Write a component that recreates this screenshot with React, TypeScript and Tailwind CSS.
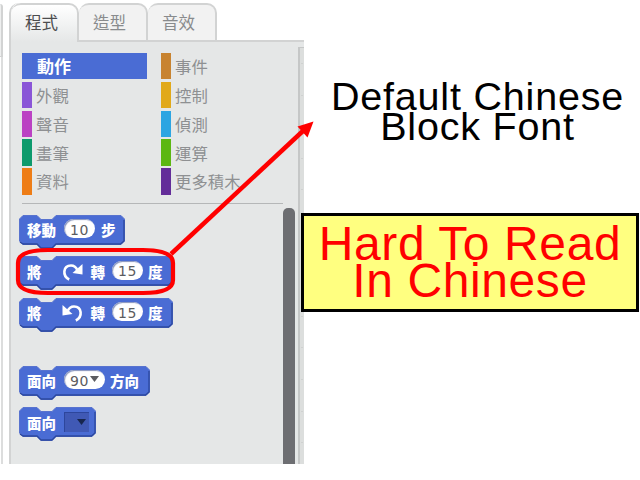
import React from "react";

const cjk = "font-['Noto_Sans_CJK_TC',sans-serif]";

function Tab({ label, active = false, width }: { label: string; active?: boolean; width: string }) {
  return (
    <div
      className={`${width} h-full rounded-t-[10px] border-t-2 border-r-2 border-[#d2d3d3] pl-[14px] pt-[5px] text-[16.5px] leading-[24px] ${
        active ? "bg-linear-to-b from-white to-[#e5e7e7] text-[#4c4d4f]" : "border-b-2 bg-[#f2f2f2] text-[#898b8d]"
      }`}
    >
      {label}
    </div>
  );
}

function Category({ label, color }: { label: string; color: string }) {
  return (
    <div className="flex h-[26.4px] items-center">
      <div className={`h-full w-[10px] shrink-0 ${color}`} />
      <span className="ml-[4px] whitespace-nowrap text-[16.4px] font-normal leading-[26px] text-[#8e9092]">{label}</span>
    </div>
  );
}

function Block({ width, className, children }: { width: number; className: string; children: React.ReactNode }) {
  const r = width - 0.5;
  const d = `M.5 4 L4 .5 H18 L22 4.5 H33 L37 .5 H${r - 3.5} L${r} 4 V26 L${r - 3.5} 29.5 H37 L33 33.5 H22 L18 29.5 H4 L.5 26Z`;
  return (
    <div className={`relative h-[30px] ${className}`} style={{ width }}>
      <svg className="absolute left-0 top-0" width={width} height="35">
        <path d={d} fill="#4a6cd4" stroke="#5873cf" strokeWidth="1" />
        <path d={`M1 27 L4 29 H18 L22 33 H33 L37 29 H${r - 4} L${r - 0.5} 26 V5`} fill="none" stroke="#2c489e" strokeWidth="1.3" />
      </svg>
      <div className="relative flex h-full items-center pl-[8px] pt-[1px] text-[14.5px] font-black leading-[20px] text-white">
        {children}
      </div>
    </div>
  );
}

function Value({ children, width }: { children: React.ReactNode; width: string }) {
  return (
    <div
      className={`${width} mb-[3px] flex h-[19px] items-center justify-center rounded-full bg-white pt-[2px] font-['DejaVu_Sans',sans-serif] text-[14px] font-normal tracking-[0.5px] text-[#5b5c60] shadow-[inset_1px_1px_1px_#8593bd]`}
    >
      {children}
    </div>
  );
}

function Turn({ left = false }: { left?: boolean }) {
  return (
    <svg className={`ml-[20px] h-[18px] w-[21px] ${left ? "-scale-x-100" : ""}`} viewBox="0 0 21 18">
      <path d="M7.2 16.5 C0 13 1 2.5 9 2.5 C13 2.5 14.5 5 15.5 7.5" fill="none" stroke="white" strokeWidth="2.6" />
      <path d="M20.5 1 V11.5 L10.5 10Z" fill="white" />
    </svg>
  );
}

export default function App() {
  return (
    <main className={`relative h-[480px] w-[640px] overflow-hidden bg-white ${cjk}`}>
      <div className="flex h-[464px] w-[304px]">
        <div className="h-full w-[3px] pt-[4px]">
          <div className="h-[53px] rounded-tr-[4px] border-b border-r-2 border-[#d2d3d3] bg-[#eeefef]" />
          <div className="h-[407px] border-r-2 border-[#dcdddd]" />
        </div>
        <section className="ml-[6px] flex w-[295px] flex-col pt-[3px]">
          <nav className="flex h-[39px]">
            <div className="h-full rounded-tl-[10px] border-l-2 border-[#d2d3d3]">
              <Tab label="程式" active width="w-[68px]" />
            </div>
            <Tab label="造型" width="w-[69px]" />
            <Tab label="音效" width="w-[69px]" />
            <div className="flex-1 border-b-2 border-[#d2d3d3]" />
          </nav>
          <div className="flex min-h-0 flex-1 border-l-2 border-[#d2d3d3] bg-[#e5e7e7]">
            <div className="flex w-[272px] flex-col">
              <div className="ml-[11px] mt-[11px] grid grid-cols-[139px_122px] gap-y-[2.4px]">
                <div className="flex h-[26.4px] w-[125px] items-center bg-[#4a6cd4] pl-[15px] text-[17px] font-bold leading-[26px] text-white">
                  動作
                </div>
                <Category label="事件" color="bg-[#c88330]" />
                <Category label="外觀" color="bg-[#8a55d7]" />
                <Category label="控制" color="bg-[#e1a91a]" />
                <Category label="聲音" color="bg-[#bb42c3]" />
                <Category label="偵測" color="bg-[#2ca5e2]" />
                <Category label="畫筆" color="bg-[#0e9a6c]" />
                <Category label="運算" color="bg-[#5cb712]" />
                <Category label="資料" color="bg-[#ee7d16]" />
                <Category label="更多積木" color="bg-[#632d99]" />
              </div>
              <div className="ml-[11px] mt-[8px] h-px bg-[#b5b7b8]" />
              <div className="ml-[8px] mt-[11px]">
                <Block width={106} className="">
                  移動
                  <div className="ml-[8px] mr-[6px]"><Value width="w-[31px]">10</Value></div>
                  步
                </Block>
                <Block width={154} className="mt-[11.5px]">
                  將
                  <Turn />
                  <span className="ml-[8px] mr-[7px]">轉</span>
                  <Value width="w-[31px]">15</Value>
                  <span className="ml-[5px]">度</span>
                </Block>
                <Block width={154} className="mt-[11.5px]">
                  將
                  <Turn left />
                  <span className="ml-[8px] mr-[7px]">轉</span>
                  <Value width="w-[31px]">15</Value>
                  <span className="ml-[5px]">度</span>
                </Block>
                <Block width={131} className="mt-[38px]">
                  面向
                  <div className="ml-[8px] mr-[5px]">
                    <Value width="w-[41px]">
                      90
                      <svg className="mb-[4px] ml-px h-[6px] w-[9px]" viewBox="0 0 9 6"><path d="M0 0h9L4.5 6Z" fill="#5b5c60" /></svg>
                    </Value>
                  </div>
                  方向
                </Block>
                <Block width={77} className="mt-[11.5px]">
                  面向
                  <div className="mb-[2px] ml-[8px] flex h-[20px] w-[25px] items-center justify-end border-l border-t border-[#2d469c] bg-[#4059b5] pr-[3px]">
                    <svg className="h-[6px] w-[9px]" viewBox="0 0 9 6"><path d="M0 0h9L4.5 6Z" fill="#17264f" /></svg>
                  </div>
                </Block>
              </div>
            </div>
            <div className="mt-[166px] w-[12px] rounded-t-[5px] bg-[#6d6e72]" />
            <div className="ml-[3px] mt-[5px] flex flex-1 flex-col gap-[30.6px] overflow-hidden border-l-2 border-t border-[#c5c7c7] bg-[#dcdedd] pt-[15px]">
              {Array.from({ length: 13 }, (_, i) => (
                <div key={i} className="ml-[1px] h-px w-[2px] shrink-0 bg-[#cfd1d0]" />
              ))}
            </div>
          </div>
        </section>
      </div>

      <p className="absolute left-[330px] top-[81px] w-[295px] whitespace-nowrap text-center font-['Liberation_Sans',sans-serif] text-[39.5px] leading-[30px] tracking-[0.8px] text-black">
        Default Chinese
        <br />
        Block Font
      </p>
      <div className="absolute left-[301px] top-[213px] h-[99px] w-[338px] whitespace-nowrap border-[3px] border-black bg-[#ffff80] pt-[9px] text-center font-['Liberation_Sans',sans-serif] text-[48px] leading-[37px] tracking-[0.6px] text-[#ff0000]">
        Hard To Read
        <br />
        In Chinese
      </div>
      <svg className="pointer-events-none absolute left-0 top-0" width="640" height="480">
        <path d="M18 263 C18 254 28 250 48 250 H143 C163 250 173 254 173 263 V280 C173 289 163 293 143 293 H48 C28 293 18 289 18 280Z" fill="none" stroke="#f00" strokeWidth="4.2" />
        <path d="M171 254 L304 130" stroke="#f00" strokeWidth="4.5" />
        <path d="M313.5 121.5 L307.5 137.5 L297.5 126.5Z" fill="#f00" />
      </svg>
    </main>
  );
}
